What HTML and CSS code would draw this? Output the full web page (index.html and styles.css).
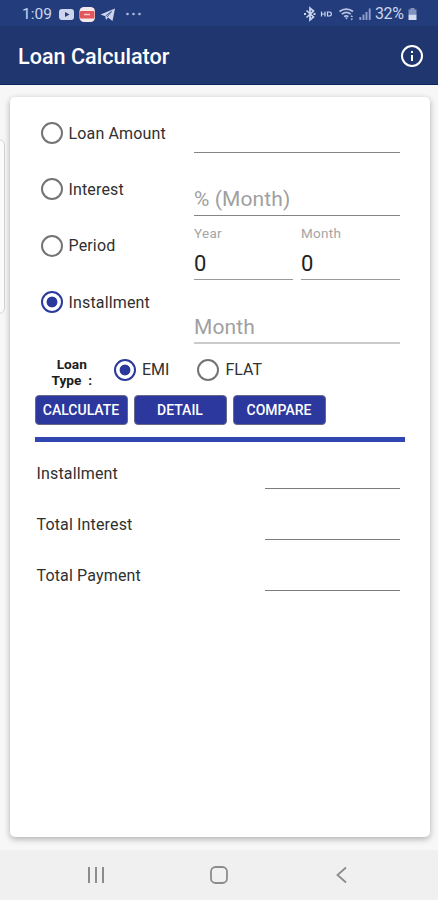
FILE: index.html
```
<!DOCTYPE html>
<html lang="en">
<head>
<meta charset="utf-8">
<meta name="viewport" content="width=device-width">
<title>Loan Calculator</title>
<link rel="stylesheet" href="styles.css">
</head>
<body>
<div class="status">
  <span class="clock">1:09</span>
  <svg class="notices" width="84" height="18" viewBox="0 0 84 18">
    <rect x="0" y="4" width="15" height="11" rx="3" fill="#cdd5ec"/>
    <path d="M6 7l4.500 2.500L6 12z" fill="#243e7d"/>
    <rect x="20.500" y="2" width="15.500" height="15" rx="4.500" fill="#f5e9ea"/>
    <rect x="21" y="6" width="14.500" height="7.500" rx="1" fill="#e2575c"/>
    <path d="M25 9.500h6" stroke="#f8c9c9" stroke-width="1.500"/>
    <path d="M41.500 9.500L56 3.500 53.500 16l-4.500-3.500-2 2.500-.8-3.700z" fill="#cdd5ec"/>
    <path d="M46.500 11l6-4.500-4.500 5.500" stroke="#243e7d" fill="none" stroke-width=".8"/>
    <g fill="#aebbe0"><circle cx="68.500" cy="9" r="1.300"/><circle cx="74.500" cy="9" r="1.300"/><circle cx="80.500" cy="9" r="1.300"/></g>
  </svg>
  <svg class="signals" width="68" height="18" viewBox="0 0 68 18">
    <path d="M2.500 5.500l7 6.500-3.500 3V3l3.500 3-7 6.500" stroke="#cdd5ec" stroke-width="1.700" fill="none"/>
    <path d="M0 9h2M9.500 9h2" stroke="#cdd5ec" stroke-width="1.800"/>
    <path d="M17.500 6.500v5M21 6.500v5M17.500 9H21M23.500 7H26l1.300 1v2L26 11h-2.500z" stroke="#cdd5ec" stroke-width="1.200" fill="none"/>
    <g fill="none" stroke="#b8c4e4" stroke-width="1.700"><path d="M35.500 6.500c4-3.300 9.500-3.300 13.500 0M37.800 9.200c2.800-2.200 6.200-2.200 9 0M40.100 11.700c1.300-1 3-1 4.300 0"/></g>
    <path d="M41 12.500l1.500 2 1.500-2zM46.500 12l1.300-2 1.200 2zM46.500 13.500h2.500l-1.200 2z" fill="#b8c4e4"/>
    <path d="M56.300 12v3M59.500 9.500V15M62.500 7v8M65.700 3.500V15" stroke="#8fa0cf" stroke-width="1.900"/>
  </svg>
  <span class="charge">32%</span>
  <svg class="battery" width="9" height="14" viewBox="0 0 9 14">
    <path d="M2.500 1h4v1.500h2v5h-8v-5h2z" fill="#8293c2"/><path d="M.5 7.500h8V13h-8z" fill="#d5dcf0"/>
  </svg>
</div>
<header class="appbar">
  <h1>Loan Calculator</h1>
  <svg width="24" height="24" viewBox="0 0 24 24"><circle cx="12" cy="12" r="10" fill="none" stroke="#fff" stroke-width="2"/><path d="M12 11v6M12 7v2" stroke="#fff" stroke-width="2"/></svg>
</header>
<main>
  <div class="edge-panel"></div>
  <section class="card">
    <div class="form">
      <div class="choices">
        <div class="option"><i class="radio"></i>Loan Amount</div>
        <div class="option"><i class="radio"></i>Interest</div>
        <div class="option"><i class="radio"></i>Period</div>
        <div class="option"><i class="radio on"></i>Installment</div>
      </div>
      <div class="fields">
        <div class="field amount"></div>
        <div class="field hint">% (Month)</div>
        <div class="pair">
          <div class="field"><small>Year</small><b>0</b></div>
          <div class="field"><small>Month</small><b>0</b></div>
        </div>
        <div class="field hint disabled">Month</div>
      </div>
    </div>
    <div class="type">
      <div class="type-label"><span>Loan</span><span>Type &nbsp;:</span></div>
      <div class="option"><i class="radio on"></i>EMI</div>
      <div class="option flat"><i class="radio"></i>FLAT</div>
    </div>
    <div class="buttons"><button>CALCULATE</button><button>DETAIL</button><button>COMPARE</button></div>
    <div class="rule"></div>
    <div class="results">
      <div class="result"><span>Installment</span><div class="value"></div></div>
      <div class="result"><span>Total Interest</span><div class="value"></div></div>
      <div class="result"><span>Total Payment</span><div class="value"></div></div>
    </div>
  </section>
</main>
<nav>
  <svg width="18" height="18" viewBox="0 0 18 18"><path d="M2 1v16M9 1v16M16 1v16" stroke="#8c8c8c" stroke-width="2"/></svg>
  <svg width="18" height="18" viewBox="0 0 18 18"><rect x="1" y="1" width="16" height="16" rx="4.500" fill="none" stroke="#8c8c8c" stroke-width="1.800"/></svg>
  <svg width="18" height="18" viewBox="0 0 18 18"><path d="M13 1.500L4.500 9l8.500 7.500" fill="none" stroke="#8c8c8c" stroke-width="1.800"/></svg>
</nav>
</body>
</html>
```

FILE: styles.css
```
* { box-sizing: border-box; }
body {
  margin: 0;
  height: 900px;
  display: flex;
  flex-direction: column;
  overflow: hidden;
  background: #f0f0f0;
  color: #303030;
  font-family: Roboto, sans-serif;
  font-size: 16px;
}
svg { display: block; flex: none; }
.status {
  height: 26px;
  display: flex;
  align-items: center;
  padding: 1px 21px 0 22px;
  background: #233d7c;
  color: #cdd5ec;
}
.clock { width: 37px; font-size: 15.500px; }
.signals { margin-left: auto; }
.charge { width: 33px; margin-left: 3px; font-size: 16px; letter-spacing: -.4px; }
.appbar {
  height: 59px;
  display: flex;
  align-items: center;
  justify-content: space-between;
  padding: 1px 14px 0 18px;
  background: #20366f;
  border-bottom: 1px solid #0c2560;
  color: #fff;
}
h1 { margin: 2px 0 0; font-size: 21.600px; font-weight: 500; }
main {
  position: relative;
  height: 765px;
  padding: 12px 8.500px 0 9.500px;
  background: #f7f7f7;
}
.edge-panel {
  position: absolute;
  left: -10px;
  top: 54px;
  width: 15px;
  height: 175px;
  border: 1px solid #d5d5d5;
  border-radius: 6px;
  background: #fbfbfb;
}
.card {
  position: relative;
  height: 740px;
  padding: 0 29.500px 0 25px;
  border-radius: 5px;
  background: #fff;
  box-shadow: 0 2px 6px rgba(0,0,0,.3);
}
.form { display: flex; height: 247px; }
.choices { width: 159.500px; padding: 8px 0 0 6px; }
.choices .option { height: 56.300px; }
.option { display: flex; align-items: center; gap: 6px; letter-spacing: .15px; white-space: nowrap; }
.radio {
  flex: none;
  width: 22px;
  height: 22px;
  border: 2px solid #747474;
  border-radius: 50%;
}
.radio.on {
  border-color: #2a3a9c;
  background: radial-gradient(circle, #2a3a9c 5px, #fff 5.800px);
}
.fields { width: 206px; }
.field { border-bottom: 1px solid #858585; }
.amount { height: 56px; }
.hint {
  height: 63px;
  display: flex;
  align-items: flex-end;
  padding-bottom: 3px;
  color: #a0a0a0;
  font-size: 21px;
  line-height: 25px;
  letter-spacing: .1px;
}
.pair { display: flex; gap: 8px; height: 64px; }
.pair .field { flex: 1; border-color: #999; padding-top: 9px; }
.pair small { display: block; font-size: 13.500px; line-height: 16px; color: #a5a5a5; letter-spacing: .3px; }
.pair b { display: block; margin-top: 10px; font-size: 22px; font-weight: 400; line-height: 26px; color: #222; }
.hint.disabled { height: 64px; border-bottom: 2px solid #cbcbcb; padding-bottom: 2px; }
.type { display: flex; height: 51px; }
.type-label {
  width: 79.500px;
  padding-top: 12px;
  font-size: 13.700px;
  font-weight: 700;
  line-height: 16px;
  color: #1c1c1c;
  text-align: center;
}
.type-label span { display: block; padding-right: 5px; }
.type .option { height: 51px; letter-spacing: 0; }
.type .flat { margin-left: 28px; }
.buttons { display: flex; gap: 6px; }
button {
  width: 93px;
  height: 30px;
  padding: 0;
  border: 1px solid #66698c;
  border-radius: 4px;
  background: #2c389e;
  color: #fff;
  font: 500 14px Roboto, sans-serif;
}
.rule { width: 370px; height: 5px; margin-top: 12px; background: #3046b0; }
.results { padding-left: 2px; }
.result { display: flex; justify-content: space-between; height: 51px; letter-spacing: .15px; }
.result:first-child { height: 47px; }
.result span { align-self: flex-end; line-height: 20px; margin-bottom: 5px; }
.value { width: 135px; border-bottom: 1px solid #7c7c7c; }
nav {
  height: 50px;
  display: flex;
  justify-content: space-between;
  align-items: center;
  padding: 0 87px;
  background: #f0f0f0;
}
```
